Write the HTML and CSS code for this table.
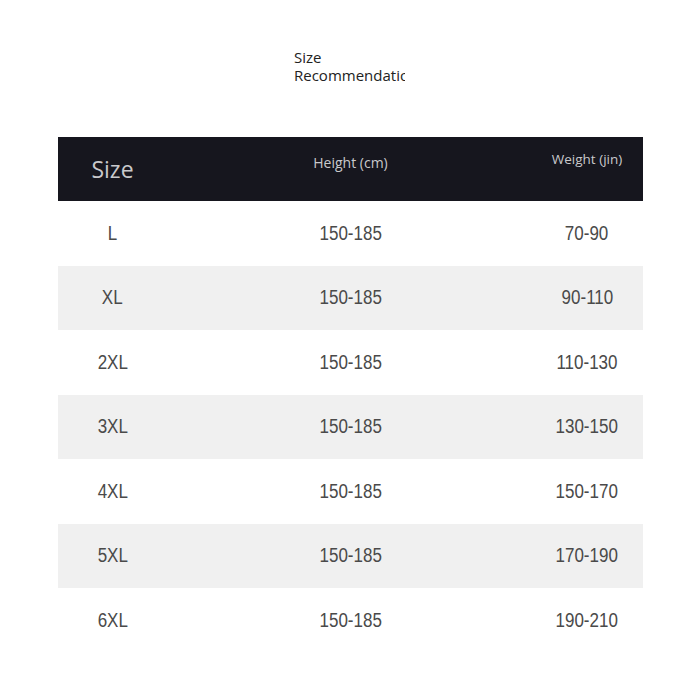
FILE: index.html
```html
<!DOCTYPE html>
<html>
<head>
<meta charset="utf-8">
<link rel="stylesheet" href="styles.css">
</head>
<body>
<div class="page">
  <div class="title"><div class="tl">Size</div><div class="tl">Recommendation</div></div>
  <div class="table">
    <div class="row head">
      <div class="c1 hsize">Size</div>
      <div class="c2 hsmall">Height (cm)</div>
      <div class="c3 hsmall hw">Weight (jin)</div>
    </div>
    <div class="row"><div class="c1"><span class="n">L</span></div><div class="c2"><span class="n">150-185</span></div><div class="c3"><span class="n">70-90</span></div></div>
    <div class="row alt"><div class="c1"><span class="n">XL</span></div><div class="c2"><span class="n">150-185</span></div><div class="c3"><span class="n">90-110</span></div></div>
    <div class="row"><div class="c1"><span class="n">2XL</span></div><div class="c2"><span class="n">150-185</span></div><div class="c3"><span class="n">110-130</span></div></div>
    <div class="row alt"><div class="c1"><span class="n">3XL</span></div><div class="c2"><span class="n">150-185</span></div><div class="c3"><span class="n">130-150</span></div></div>
    <div class="row"><div class="c1"><span class="n">4XL</span></div><div class="c2"><span class="n">150-185</span></div><div class="c3"><span class="n">150-170</span></div></div>
    <div class="row alt"><div class="c1"><span class="n">5XL</span></div><div class="c2"><span class="n">150-185</span></div><div class="c3"><span class="n">170-190</span></div></div>
    <div class="row"><div class="c1"><span class="n">6XL</span></div><div class="c2"><span class="n">150-185</span></div><div class="c3"><span class="n">190-210</span></div></div>
  </div>
</div>
</body>
</html>
```
FILE: styles.css
```css
html, body {
  margin: 0;
  padding: 0;
  background: #ffffff;
}
.page {
  width: 700px;
  height: 700px;
  padding-top: 48px;
  box-sizing: border-box;
}
.title {
  margin-left: 294px;
  width: 111px;
  overflow: hidden;
  white-space: nowrap;
  font-family: "Open Sans", sans-serif;
  font-size: 15px;
  line-height: 18px;
  color: #222;
}
.table {
  margin-top: 53px;
  margin-left: 58px;
  width: 585px;
  font-family: "Liberation Sans", sans-serif;
  font-size: 20px;
  color: #4a4a4a;
}
.row {
  display: grid;
  grid-template-columns: 112px 1fr 112px;
  align-items: center;
  height: 64.5px;
}
.row > div {
  text-align: center;
}
.n {
  display: inline-block;
  transform: scaleX(0.85);
}
.c1 {
  padding-right: 3px;
}
.row.alt {
  background: #f0f0f0;
}
.row.head {
  height: 64px;
  background: #16161e;
  color: #c9c9cc;
  font-family: "Open Sans", sans-serif;
}
.hsize {
  font-size: 23px;
}
.hsmall {
  font-size: 14px;
  margin-top: -14px;
}
.hw {
  font-size: 13.5px;
  margin-top: -20px;
}
```
